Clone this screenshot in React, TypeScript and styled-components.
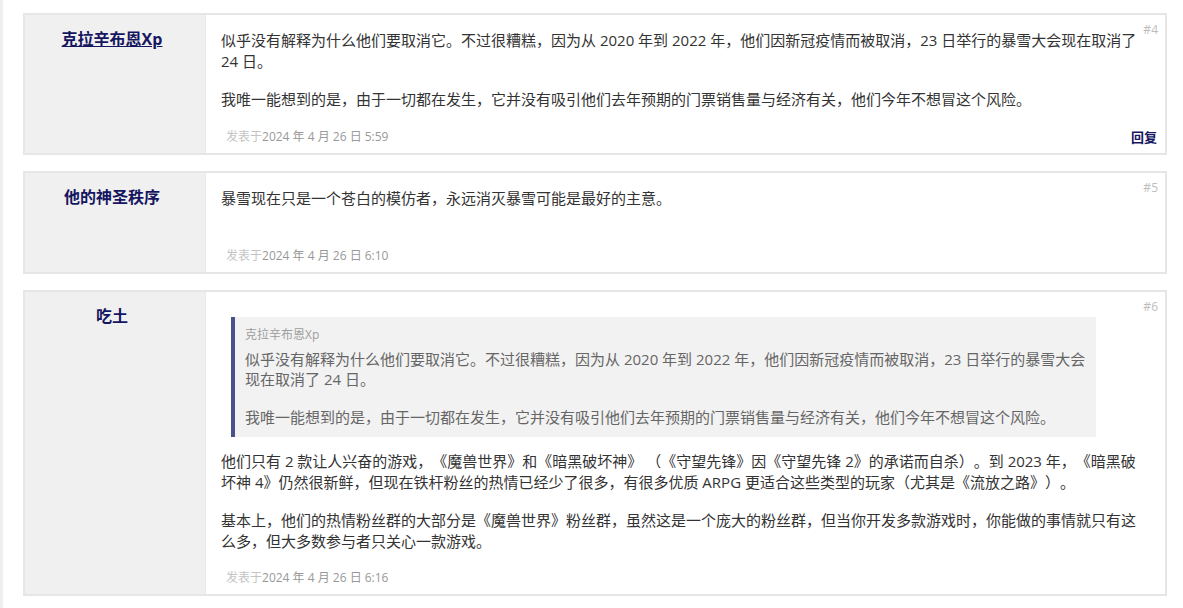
import * as React from "react";
import styled, { createGlobalStyle } from "styled-components";

const GlobalStyle = createGlobalStyle`
  html, body {
    margin: 0;
    padding: 0;
    background: #ffffff;
  }
  body {
    font-family: "Open Sans", "Noto Sans CJK SC", sans-serif;
    color: #333333;
    text-spacing-trim: space-all;
  }
`;

const Page = styled.div`
  box-sizing: border-box;
  min-height: 608px;
  border-left: 3px solid #efefef;
  padding: 13px 16px 0 20px;
  display: flex;
  flex-direction: column;
  gap: 16px;
`;

const Post = styled.div`
  display: grid;
  grid-template-columns: 181px 1fr;
  border: 2px solid #e6e6e6;
  background: #ffffff;
`;

const Author = styled.div`
  background: #f0f0f0;
  border-right: 1px solid #e9e9e9;
  text-align: center;
  padding: 12px 6px 0 0;
`;

const AuthorName = styled.a<{ $underline?: boolean }>`
  font-size: 16px;
  font-weight: 700;
  line-height: 24px;
  color: #15165f;
  text-decoration: ${(p) => (p.$underline ? "underline" : "none")};
  cursor: pointer;
`;

const Body = styled.div`
  position: relative;
  padding: 15px 22px 7px 15px;
  min-width: 0;
`;

const PostNumber = styled.span`
  position: absolute;
  top: 8px;
  right: 7px;
  font-size: 12px;
  line-height: 14px;
  color: #bdbdbd;
`;

const Message = styled.div`
  min-height: 59px;
  font-size: 15px;
  line-height: 20.6px;
`;

const Para = styled.p`
  margin: 0 0 18px;
`;

const Quote = styled.blockquote`
  margin: 10px 47px 14px 10px;
  padding: 9px 8px 9.5px 10px;
  background: #f2f2f2;
  border-left: 4px solid #48518a;
  color: #666666;

  ${Para} {
    margin-bottom: 17px;
  }
  ${Para}:last-child {
    margin-bottom: 0;
  }
`;

const QuoteAuthor = styled.div`
  font-size: 12px;
  line-height: 18px;
  color: #9e9e9e;
  margin-bottom: 5px;
`;

const Footer = styled.div`
  display: flex;
  justify-content: space-between;
  align-items: center;
  line-height: 18px;
`;

const PostDate = styled.span`
  padding-left: 5px;
  font-size: 12px;
  color: #999999;
`;

const DateLabel = styled.span`
  color: #c4c4c4;
`;

const Reply = styled.a`
  font-size: 13px;
  font-weight: 700;
  color: #15165f;
  margin-right: -14px;
  cursor: pointer;
`;

interface PostData {
  author: string;
  underline?: boolean;
  number: number;
  date: string;
  quote?: { author: string; paragraphs: string[] };
  paragraphs: string[];
  reply?: boolean;
}

const firstPara =
  "似乎没有解释为什么他们要取消它。不过很糟糕，因为从 2020 年到 2022 年，他们因新冠疫情而被取消，23 日举行的暴雪大会现在取消了 24 日。";
const secondPara =
  "我唯一能想到的是，由于一切都在发生，它并没有吸引他们去年预期的门票销售量与经济有关，他们今年不想冒这个风险。";

const posts: PostData[] = [
  {
    author: "克拉辛布恩Xp",
    underline: true,
    number: 4,
    date: "2024 年 4 月 26 日 5:59",
    paragraphs: [firstPara, secondPara],
    reply: true,
  },
  {
    author: "他的神圣秩序",
    number: 5,
    date: "2024 年 4 月 26 日 6:10",
    paragraphs: ["暴雪现在只是一个苍白的模仿者，永远消灭暴雪可能是最好的主意。"],
  },
  {
    author: "吃土",
    number: 6,
    date: "2024 年 4 月 26 日 6:16",
    quote: { author: "克拉辛布恩Xp", paragraphs: [firstPara, secondPara] },
    paragraphs: [
      "他们只有 2 款让人兴奋的游戏，《魔兽世界》和《暗黑破坏神》 （《守望先锋》因《守望先锋 2》的承诺而自杀）。到 2023 年，《暗黑破坏神 4》仍然很新鲜，但现在铁杆粉丝的热情已经少了很多，有很多优质 ARPG 更适合这些类型的玩家（尤其是《流放之路》）。",
      "基本上，他们的热情粉丝群的大部分是《魔兽世界》粉丝群，虽然这是一个庞大的粉丝群，但当你开发多款游戏时，你能做的事情就只有这么多，但大多数参与者只关心一款游戏。",
    ],
  },
];

function PostItem({ post }: { post: PostData }) {
  return (
    <Post>
      <Author>
        <AuthorName $underline={post.underline}>{post.author}</AuthorName>
      </Author>
      <Body>
        <PostNumber>#{post.number}</PostNumber>
        <Message>
          {post.quote && (
            <Quote>
              <QuoteAuthor>{post.quote.author}</QuoteAuthor>
              {post.quote.paragraphs.map((text, i) => (
                <Para key={i}>{text}</Para>
              ))}
            </Quote>
          )}
          {post.paragraphs.map((text, i) => (
            <Para key={i}>{text}</Para>
          ))}
        </Message>
        <Footer>
          <PostDate>
            <DateLabel>发表于</DateLabel>
            {post.date}
          </PostDate>
          {post.reply && <Reply>回复</Reply>}
        </Footer>
      </Body>
    </Post>
  );
}

export default function App() {
  return (
    <>
      <GlobalStyle />
      <Page>
        {posts.map((post) => (
          <PostItem key={post.number} post={post} />
        ))}
      </Page>
    </>
  );
}
